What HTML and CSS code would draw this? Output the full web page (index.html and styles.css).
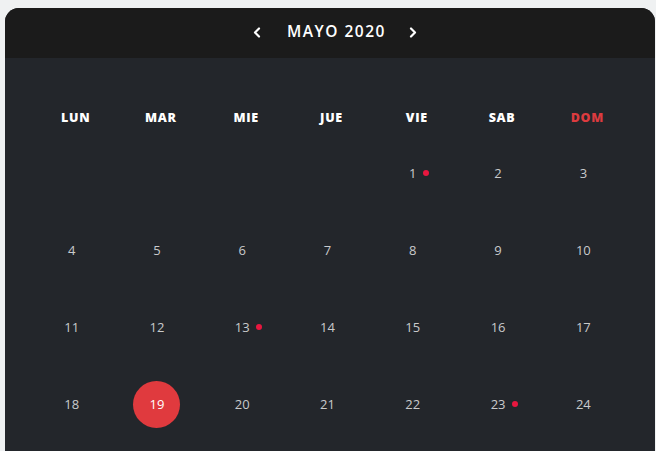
FILE: index.html
```html
<!DOCTYPE html>
<html lang="es">
<head>
<meta charset="utf-8">
<title>Calendario</title>
<link rel="stylesheet" href="styles.css">
</head>
<body>
<div class="calendar">
  <div class="cal-header">
    <button class="nav" aria-label="Anterior">
      <svg width="8" height="11" viewBox="0 0 8 11"><path d="M6 1.5 2 5.5 6 9.5" fill="none" stroke="#fff" stroke-width="2.2" stroke-linecap="round" stroke-linejoin="round"/></svg>
    </button>
    <span class="title">MAYO 2020</span>
    <button class="nav" aria-label="Siguiente">
      <svg width="8" height="11" viewBox="0 0 8 11"><path d="M2 1.5 6 5.5 2 9.5" fill="none" stroke="#fff" stroke-width="2.2" stroke-linecap="round" stroke-linejoin="round"/></svg>
    </button>
  </div>
  <div class="cal-body">
    <div class="weekdays">
      <span>LUN</span><span>MAR</span><span>MIE</span><span>JUE</span><span>VIE</span><span>SAB</span><span class="sun">DOM</span>
    </div>
    <div class="days">
      <div class="day"></div>
      <div class="day"></div>
      <div class="day"></div>
      <div class="day"></div>
      <div class="day"><span class="num event">1</span></div>
      <div class="day"><span class="num">2</span></div>
      <div class="day"><span class="num">3</span></div>

      <div class="day"><span class="num">4</span></div>
      <div class="day"><span class="num">5</span></div>
      <div class="day"><span class="num">6</span></div>
      <div class="day"><span class="num">7</span></div>
      <div class="day"><span class="num">8</span></div>
      <div class="day"><span class="num">9</span></div>
      <div class="day"><span class="num">10</span></div>

      <div class="day"><span class="num">11</span></div>
      <div class="day"><span class="num">12</span></div>
      <div class="day"><span class="num event">13</span></div>
      <div class="day"><span class="num">14</span></div>
      <div class="day"><span class="num">15</span></div>
      <div class="day"><span class="num">16</span></div>
      <div class="day"><span class="num">17</span></div>

      <div class="day"><span class="num">18</span></div>
      <div class="day"><span class="num today">19</span></div>
      <div class="day"><span class="num">20</span></div>
      <div class="day"><span class="num">21</span></div>
      <div class="day"><span class="num">22</span></div>
      <div class="day"><span class="num event">23</span></div>
      <div class="day"><span class="num">24</span></div>
    </div>
  </div>
</div>
</body>
</html>
```
FILE: styles.css
```css
html, body {
  margin: 0;
  padding: 0;
  background: #eff1f2;
  overflow: hidden;
}
body {
  font-family: "Open Sans", "Liberation Sans", sans-serif;
}
.calendar {
  margin: 8px 0 0 5px;
  width: 650px;
  height: 520px;
  border-radius: 14px 14px 0 0;
  background: #23262b;
  overflow: hidden;
}
.cal-header {
  height: 50px;
  box-sizing: border-box;
  padding: 0 0 2px 10px;
  background: #1b1b1b;
  display: flex;
  align-items: center;
  justify-content: center;
}
.nav {
  background: none;
  border: 0;
  padding: 0;
  width: 14px;
  height: 14px;
  display: flex;
  align-items: center;
  justify-content: center;
  cursor: pointer;
}
.title {
  color: #fff;
  font-size: 15.5px;
  font-weight: 600;
  letter-spacing: 1.5px;
  margin: 0 20px 0 23px;
  line-height: 1;
}
.cal-body {
  padding: 46px 25px 0 28px;
}
.weekdays {
  display: grid;
  grid-template-columns: repeat(7, 1fr);
  height: 26px;
  align-items: center;
  text-align: center;
  color: #fff;
  font-size: 12.5px;
  font-weight: 800;
  letter-spacing: 0.7px;
}
.weekdays .sun {
  color: #dc3b3f;
}
.days {
  margin-top: 5px;
  display: grid;
  grid-template-columns: repeat(7, 1fr);
  grid-auto-rows: 77px;
}
.day {
  display: flex;
  align-items: center;
  justify-content: center;
  padding-right: 8px;
}
.num {
  position: relative;
  color: #c9cacc;
  font-size: 13px;
  font-weight: 500;
  line-height: 1;
}
.num.event::after {
  content: "";
  position: absolute;
  left: calc(100% + 6px);
  top: 50%;
  width: 6px;
  height: 6px;
  margin-top: -3.5px;
  border-radius: 50%;
  background: #e8173f;
}
.num.today {
  width: 47px;
  height: 47px;
  border-radius: 50%;
  background: #e03a3e;
  color: #fff;
  display: flex;
  align-items: center;
  justify-content: center;
}
```
